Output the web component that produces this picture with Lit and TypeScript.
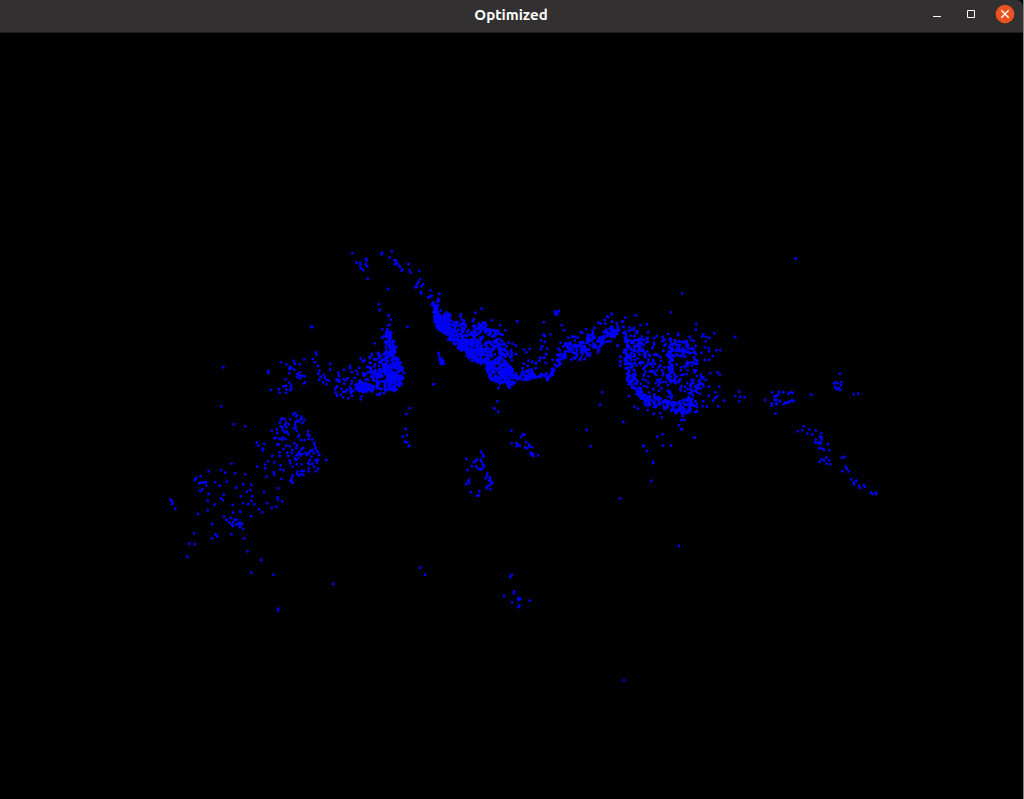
import { LitElement, html, svg, css } from "lit";
import { customElement } from "lit/decorators.js";

interface Patch {
  x: number;
  y: number;
  points: string;
}

interface Region {
  x: number;
  y: number;
  count: number;
  outline: string;
}

// Patches hold points in thirds of a pixel, measured from the patch origin.
const UNIT = 3;

const patches: Patch[] = [
  {
    x: 0, y: 0,
    points: `2386,776 2388,775 1872,2041 1261,1703 1275,1724 933,981 937,981`,
  },
  {
    x: 160, y: 350,
    points: `190,52 184,169 221,223 256,229 325,62 325,69 333,120 363,37 379,43 401,33 405,41 419,43 433,28 458,27 465,37 467,7 470,14 474,48
      390,50 388,57 395,54 403,59 388,70 412,73 419,67 412,82 420,85 426,78 434,79 418,76 432,100 436,97 377,88 388,98 379,107 371,109 393,107 395,115
      390,121 379,118 378,129 356,117 359,128 478,63 475,72 511,41 511,59 491,74 482,81 478,90 495,82 498,90 489,97 506,92 499,103 535,69 532,88 538,95
      532,110 526,117 527,127 532,137 400,193 406,189 412,196 408,199 424,200 424,207 433,211 427,219 413,211 417,214 407,216 366,205 374,208 363,209 359,218
      391,208 378,218 375,225 386,224 362,229 367,232 379,232 405,224 408,232 401,235 410,242 368,241 374,247 380,245 385,252 350,238 335,243 352,249
      417,255 415,260 343,264 347,264 359,266 368,263 367,269 377,267 444,244 443,253 448,257 446,267 423,270 433,271 457,268 463,278 464,285 466,293
      290,278 295,287 313,281 309,296 307,301 352,283 356,284 370,297 379,287 389,289 403,280 410,286 409,294 397,300 430,294 424,299 418,306 382,309
      395,309 359,307 359,318 337,318 385,318 409,316 413,312 421,317 418,312 427,312 437,309 404,325 414,325 408,331 389,332 391,340 397,350 410,343 425,343
      440,315 446,310 450,303 457,300 461,309 469,301 474,307 478,315 455,320 450,330 445,338 448,343 457,342 467,330 474,330 470,338 462,350 499,330
      446,355 446,364 475,357 467,364 362,346 361,358 371,361 341,367 343,374 343,337 325,334 316,344 316,355 292,350 320,380 364,387 355,415
      413,365 411,372 418,377 424,363 431,363 423,373 430,375 398,376 396,384 391,392 397,398 214,341 184,361 196,368 226,370 256,373 146,364 122,379
      109,384 104,391`,
  },
  {
    x: 160, y: 480,
    points: `104,0 117,10 124,8 131,8 138,6 139,16 127,28 121,33 166,7 179,17 200,5 229,23 250,13 274,15 271,30 260,35 146,42 191,44 183,55 189,61
      242,49 277,49 312,37 355,25 392,2 398,7 32,59 37,65 37,72 46,86 143,62 164,74 218,75 250,70 265,73 274,62 283,73 322,70 335,84 349,80 352,52
      354,59 367,64 114,102 143,91 220,98 241,95 296,88 307,97 273,109 192,110 199,120 212,114 207,127 218,128 215,134 223,120 231,119 219,138
      229,134 235,130 240,128 240,135 246,132 240,141 250,147 157,133 102,160 166,163 172,169 157,175 214,163 253,175 88,191 104,193 82,231
      262,214 304,240 274,278 341,285 520,312 354,386 354,391`,
  },
  {
    x: 330, y: 240,
    points: `67,40 79,68 91,68 91,76 92,85 100,90 109,57 110,62 107,73 112,79 113,116 154,43 157,39 185,34 179,52 193,61 198,62 200,69 194,73 204,73
      209,80 217,88 215,92 236,72 239,91 242,98 268,93 271,118 265,126 260,133 256,142 261,141 280,133 274,139 301,151 272,156 274,161 305,167 299,170
      295,173 328,162 325,176 327,183 322,186 309,187 305,193 332,211 349,217 343,223 175,147 146,193 149,211 175,227 182,239 157,268 162,289 156,293 232,261`,
  },
  {
    x: 330, y: 310,
    points: `149,0 176,17 182,29 232,51 134,100 143,130 125,132 157,58 160,80 166,97 326,129 327,137 330,145 334,152 337,161 342,160 332,162
      335,147 339,154 332,156 329,150 337,156 310,223 239,295 229,313 227,357 230,376 218,380 225,395 232,397 237,406 238,409 25,188 42,179 60,168 60,175 27,198 28,210 19,209
      22,212 42,208 53,205 47,211 43,221 19,232 16,237 34,236 40,245 18,248 21,258 32,254 39,262 55,265 52,239 60,234 47,245 62,249 66,258 66,213
      95,259 92,268 79,183 83,192 88,174 65,186`,
  },
  {
    x: 430, y: 300,
    points: `27,3 7,12 15,19 13,28 17,39 155,26 136,38 92,43 92,50 132,58 128,64 185,61 211,76 226,91 262,65 341,67 377,35 383,42 386,33 340,103
      344,107 361,103 333,121 344,126 336,139 333,147 352,146 283,148 299,147 289,157 258,137 259,163 236,128 247,131 385,146 381,164 387,168 348,162
      342,173 333,173 328,182 347,189 368,179 383,183 374,194 307,185 295,182 281,191 277,205 293,198 297,210 318,191 316,205 11,253
      205,264 239,264 203,304 193,325 205,335`,
  },
  {
    x: 510, y: 300,
    points: `21,64 101,67 134,35 139,38 147,34 137,44 155,76 163,91 100,103 104,108 121,103 93,121 104,126 97,139 92,148 112,146 42,148 59,147
      49,157 109,163 91,173 103,173 89,182 107,189 55,182 41,191 67,186 78,188 77,205 38,205 65,208 17,136 17,163 295,51 305,42 292,50 265,68
      271,71 284,60 286,71 306,65 321,71 323,79 337,65 346,53 323,89 341,81 228,88 253,84 356,93 323,137 332,170 331,186 331,197 302,124 293,125
      346,119 277,277 271,314 212,96 217,99 152,128 150,151 145,166`,
  },
  {
    x: 610, y: 280,
    points: `216,40 183,97 77,106 46,113 39,124 6,102 5,125 20,130 23,142 18,151 25,150 18,163 3,184 22,197 40,141 59,142 91,136 111,133 115,157
      259,133 257,149 313,160 376,171 298,173 319,211 331,211 308,229 298,239 284,240 274,218 296,205 297,214 285,202 287,184 280,163 276,170 288,171
      243,180 257,198 257,222 257,240 261,252 246,257 233,271 256,271 323,277 329,284 301,280 287,300 273,284 280,292 296,320 328,320 317,337
      322,349 315,354 309,362 342,362 325,379 278,379 291,380 267,314 269,341 296,347 280,364 261,394 388,335 376,349 391,351 388,364 403,352
      40,426 142,470 158,463 183,497 158,497 101,497 253,473 217,409 223,420 214,421 207,436 214,448 217,448 156,412 151,400 131,402 113,391
      84,386 73,380 56,349 31,230 32,243 31,257`,
  },
  {
    x: 750, y: 360,
    points: `45,120 67,97 100,97 88,96 85,104 73,110 79,109 65,130 65,137 76,161 74,120 82,120 90,124 79,130 82,133 101,133 106,128 113,128 119,125
      126,121 131,123 115,101 121,97 128,99 184,104 269,41 252,70 259,67 264,70 274,67 273,76 256,81 260,87 267,85 271,90 311,103 325,101 161,199
      157,211 143,214 178,208 197,212 172,221 187,223 214,220 210,230 215,232 215,239 197,239 196,248 204,248 212,247 211,253 235,253 208,265 215,265
      222,269 238,271 229,293 216,298 209,305 223,301 238,301 230,311 241,313 275,293 284,291 287,320 290,326 277,334 296,334 304,358 319,362 311,367
      313,373 328,378 331,384 342,376 344,380 363,397 367,402 377,398 379,402`,
  },
  {
    x: 450, y: 395,
    points: `143,19 133,41 145,50 184,107 218,118 223,118 214,126 185,145 199,144 199,154 204,149 209,153 228,142 225,157 230,160 238,149 239,155
      246,157 242,173 243,178 250,177 250,183 265,181 451,29 410,105 422,154 520,81 94,170 98,178 99,185 49,192 80,194 77,198 71,202 92,194 95,201
      99,210 103,213 66,214 78,214 83,220 91,224 97,220 53,225 112,236 110,244 107,250 119,247 121,252 118,258 124,260 127,264 120,270 113,274 109,279
      121,283 57,255 54,260 58,264 48,268 62,292 88,289 82,302 86,301 185,539 181,546 193,589 191,595 162,604 205,609 205,614 211,612 186,622
      239,617 208,632 205,637 591,168 580,153 610,201 609,204 604,258 511,310 687,453 734,128`,
  },
];

const regions: Region[] = [
  { x: 330, y: 310, count: 75, outline: "172,42 182,45 190,90 200,112 185,140 162,130 168,110 165,90" },
  { x: 330, y: 310, count: 200, outline: "180,118 195,112 203,140 215,160 223,190 220,220 205,232 190,247 175,240 178,190 160,178 170,150" },
  { x: 330, y: 310, count: 130, outline: "75,215 120,205 125,180 170,172 200,190 200,240 170,248 145,260 120,240 90,245 75,235" },
  { x: 330, y: 310, count: 60, outline: "75,222 100,218 130,225 135,240 115,245 95,248 78,240" },
  { x: 330, y: 310, count: 42, outline: "85,140 105,145 165,120 180,150 160,178 130,190 115,180 105,162 88,158" },
  { x: 330, y: 310, count: 28, outline: "66,205 130,175 130,210 90,220 70,250 55,252" },
  { x: 430, y: 300, count: 85, outline: "14,40 30,48 52,45 75,75 55,110 28,92 14,75" },
  { x: 430, y: 300, count: 320, outline: "50,80 75,85 130,105 165,130 190,165 170,190 152,194 130,180 118,188 105,155 88,150 70,130 52,118" },
  { x: 430, y: 300, count: 230, outline: "170,180 200,180 235,190 252,210 268,235 250,255 232,260 205,252 180,238 168,212" },
  { x: 430, y: 300, count: 50, outline: "55,35 70,50 102,58 110,80 165,112 160,120 100,95 70,85 48,55" },
  { x: 430, y: 300, count: 75, outline: "128,72 165,65 175,85 217,92 218,106 185,112 165,98 130,98" },
  { x: 430, y: 300, count: 75, outline: "165,125 205,112 235,130 248,160 247,195 200,185 180,150" },
  { x: 430, y: 300, count: 45, outline: "260,230 285,208 310,215 318,235 275,244" },
  { x: 430, y: 300, count: 25, outline: "318,222 345,218 375,203 375,222 352,242 325,236" },
  { x: 510, y: 300, count: 22, outline: "135,190 150,158 170,152 160,182 140,205 128,225 115,220" },
  { x: 510, y: 300, count: 85, outline: "155,140 175,110 205,110 225,130 240,140 245,175 215,182 165,178" },
  { x: 510, y: 300, count: 60, outline: "232,100 250,88 255,115 285,105 285,130 272,145 268,165 245,140 228,130" },
  { x: 510, y: 300, count: 38, outline: "285,90 302,75 310,85 328,90 320,112 295,112 275,98" },
  { x: 610, y: 280, count: 24, outline: "0,142 12,142 13,165 3,174" },
  { x: 610, y: 280, count: 50, outline: "40,155 75,143 105,175 105,210 80,215 42,200" },
  { x: 610, y: 280, count: 115, outline: "40,195 72,205 80,250 78,290 85,325 110,345 100,365 72,345 52,310 45,260" },
  { x: 610, y: 280, count: 150, outline: "75,330 110,345 150,355 190,365 250,345 265,375 255,398 205,405 170,388 140,385 105,375" },
  { x: 610, y: 280, count: 215, outline: "75,180 130,170 165,160 210,160 245,165 265,220 260,300 270,360 190,372 110,352 80,320" },
  { x: 610, y: 280, count: 50, outline: "176,200 190,190 192,250 188,300 180,322 172,300" },
  { x: 610, y: 280, count: 35, outline: "195,180 235,175 235,210 218,235 195,225" },
  { x: 610, y: 280, count: 25, outline: "240,290 285,285 285,320 240,345" },
  { x: 330, y: 240, count: 75, outline: "305,193 325,195 325,220 340,230 358,235 358,262 330,272 315,255 308,220" },
];

type Pair = [number, number];

const parse = (text: string): Pair[] =>
  text.trim().split(/\s+/).map((pair) => pair.split(",").map(Number) as Pair);

// Seeded, so that the cloud is the same on every render.
function generator(seed: number): () => number {
  let state = seed;
  return () => {
    state = (state + 0x6d2b79f5) | 0;
    let t = Math.imul(state ^ (state >>> 15), 1 | state);
    t = (t + Math.imul(t ^ (t >>> 7), 61 | t)) ^ t;
    return ((t ^ (t >>> 14)) >>> 0) / 4294967296;
  };
}

function contains(polygon: Pair[], px: number, py: number): boolean {
  let inside = false;
  for (let i = 0, j = polygon.length - 1; i < polygon.length; j = i++) {
    const [ax, ay] = polygon[i];
    const [bx, by] = polygon[j];
    if (ay > py !== by > py && px < ((bx - ax) * (py - ay)) / (by - ay) + ax) {
      inside = !inside;
    }
  }
  return inside;
}

function fill(region: Region, random: () => number): Pair[] {
  const polygon = parse(region.outline);
  const xs = polygon.map((p) => p[0]);
  const ys = polygon.map((p) => p[1]);
  const left = Math.min(...xs);
  const top = Math.min(...ys);
  const width = Math.max(...xs) - left;
  const height = Math.max(...ys) - top;
  const result: Pair[] = [];
  while (result.length < region.count) {
    const x = left + random() * width;
    const y = top + random() * height;
    if (contains(polygon, x, y)) result.push([x, y]);
  }
  return result;
}

// One path of zero-length round strokes draws the whole cloud.
function cloudPath(): string {
  const random = generator(7);
  const dot = (ox: number, oy: number, [x, y]: Pair) =>
    `M${(ox + x / UNIT).toFixed(1)} ${(oy + y / UNIT).toFixed(1)}h0`;
  return [
    ...patches.flatMap((p) => parse(p.points).map((pt) => dot(p.x, p.y, pt))),
    ...regions.flatMap((r) => fill(r, random).map((pt) => dot(r.x, r.y, pt))),
  ].join("");
}

@customElement("point-cloud")
export class PointCloud extends LitElement {
  static styles = css`
    :host {
      display: block;
      background: #000;
    }
    .view {
      display: block;
      width: 100%;
      height: 100%;
    }
    .points {
      fill: none;
      stroke: #00f;
      stroke-width: 2.8;
      stroke-linecap: round;
    }
  `;

  render() {
    return html`<svg class="view" viewBox="0 33 1023 766" role="img" aria-label="Point cloud">
      ${svg`<path class="points" d=${cloudPath()}></path>`}
    </svg>`;
  }
}

@customElement("app-root")
export class AppRoot extends LitElement {
  static styles = css`
    :host {
      display: flex;
      flex-direction: column;
      box-sizing: border-box;
      height: 100vh;
      background: #000;
      border-right: 1px solid #858585;
    }
    .bar {
      display: grid;
      grid-template-columns: 1fr auto 1fr;
      box-sizing: border-box;
      height: 33px;
      padding-right: 1px;
      background: #323030;
      border-bottom: 1px solid #1f1e1e;
      border-top-right-radius: 6px;
    }
    .title {
      grid-column: 2;
      margin: 0;
      color: #fff;
      font: bold 15px/30px Ubuntu, "Noto Sans", sans-serif;
    }
    .controls {
      display: flex;
      justify-content: flex-end;
    }
    .control {
      width: 34px;
      height: 28px;
      padding: 0;
      border: 0;
      background: none;
    }
    .icon {
      display: block;
      width: 34px;
      height: 28px;
      fill: none;
      stroke: #fff;
    }
    .disc {
      fill: #e95420;
      stroke: none;
    }
    .cross {
      stroke-width: 1.3;
    }
    .cloud {
      flex: 1;
      min-height: 0;
    }
  `;

  render() {
    return html`
      <header class="bar">
        <h1 class="title">Optimized</h1>
        <div class="controls">
          <button class="control" aria-label="Minimize">
            <svg class="icon" viewBox="0 0 34 28"><path d="M13 16.5h8"></path></svg>
          </button>
          <button class="control" aria-label="Maximize">
            <svg class="icon" viewBox="0 0 34 28"><path d="M13.5 10.5h7v7h-7z"></path></svg>
          </button>
          <button class="control" aria-label="Close">
            <svg class="icon" viewBox="0 0 34 28">
              <circle class="disc" cx="17" cy="14" r="9.3"></circle>
              <path class="cross" d="M13.3 10.3l7.4 7.4M20.7 10.3l-7.4 7.4"></path>
            </svg>
          </button>
        </div>
      </header>
      <point-cloud class="cloud"></point-cloud>
    `;
  }
}
